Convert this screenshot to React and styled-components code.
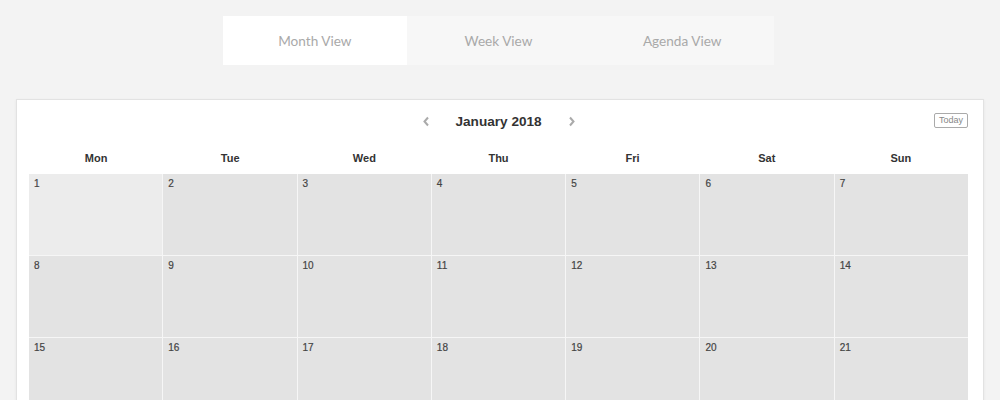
import React, { useState } from 'react';
import styled, { createGlobalStyle } from 'styled-components';

const GlobalStyle = createGlobalStyle`
    html, body {
        margin: 0;
        padding: 0;
        background: #f3f3f3;
        overflow: hidden;
    }
    * {
        box-sizing: border-box;
    }
`;

const Page = styled.div`
    display: flex;
    flex-direction: column;
    align-items: center;
    padding: 16px 16px 0 16px;
    min-height: 400px;
`;

const Tabs = styled.div`
    display: flex;
    background: #f7f7f7;
    width: 551px;
    margin-right: 3px;
`;

const Tab = styled.div`
    flex: 1;
    height: 49px;
    display: flex;
    align-items: center;
    justify-content: center;
    font-family: Lato, "Open Sans", sans-serif;
    font-size: 13.6px;
    color: #a9a9a9;
    cursor: pointer;
    background: ${({ active }) => (active ? '#ffffff' : 'transparent')};
`;

const Card = styled.div`
    margin-top: 34px;
    width: 100%;
    background: #ffffff;
    border: 1px solid #e2e2e2;
    box-shadow: 0 1px 3px rgba(0, 0, 0, 0.06);
    padding: 0 15px 0 12px;
    font-family: "Liberation Sans", Arial, Helvetica, sans-serif;
`;

const Header = styled.div`
    position: relative;
    height: 42px;
    display: flex;
    align-items: center;
    justify-content: center;
`;

const Arrow = styled.div`
    width: 60px;
    display: flex;
    align-items: center;
    justify-content: center;
    cursor: pointer;
`;

const MonthTitle = styled.div`
    width: 86px;
    text-align: center;
    font-size: 13.6px;
    font-weight: 700;
    color: #333333;
    white-space: nowrap;
`;

const TodayButton = styled.div`
    position: absolute;
    right: 0;
    top: 13px;
    border: 1px solid #aaaaaa;
    border-radius: 2px;
    font-size: 9px;
    color: #888888;
    padding: 2px 4px;
    line-height: 9px;
    cursor: pointer;
`;

const WeekHeader = styled.div`
    display: grid;
    grid-template-columns: repeat(7, 1fr);
    height: 32px;
    align-items: center;
`;

const WeekDay = styled.div`
    text-align: center;
    font-size: 11px;
    font-weight: 700;
    color: #333333;
`;

const Grid = styled.div`
    display: grid;
    grid-template-columns: repeat(7, 1fr);
    grid-auto-rows: 81px;
    gap: 1px;
    background: #f6f6f6;
`;

const Cell = styled.div`
    background: ${({ today }) => (today ? '#ececec' : '#e3e3e3')};
    padding: 4px 5px;
    font-size: 10px;
    color: #444444;
    -webkit-text-stroke: 0.2px #444444;
`;

const Chevron = ({ dir }) => (
    <svg width="8" height="11" viewBox="0 0 8 11">
        <path
            d={dir === 'left' ? 'M6 1.5 L2.5 5.5 L6 9.5' : 'M2 1.5 L5.5 5.5 L2 9.5'}
            fill="none"
            stroke="#aaaaaa"
            strokeWidth="2"
        />
    </svg>
);

const days = ['Mon', 'Tue', 'Wed', 'Thu', 'Fri', 'Sat', 'Sun'];

const App = () => {
    const [view, setView] = useState('month');
    const dates = Array.from({ length: 28 }, (_, i) => i + 1);

    return (
        <>
            <GlobalStyle />
            <Page>
                <Tabs>
                    <Tab active={view === 'month'} onClick={() => setView('month')}>Month View</Tab>
                    <Tab active={view === 'week'} onClick={() => setView('week')}>Week View</Tab>
                    <Tab active={view === 'agenda'} onClick={() => setView('agenda')}>Agenda View</Tab>
                </Tabs>
                <Card>
                    <Header>
                        <Arrow><Chevron dir="left" /></Arrow>
                        <MonthTitle>January 2018</MonthTitle>
                        <Arrow><Chevron dir="right" /></Arrow>
                        <TodayButton>Today</TodayButton>
                    </Header>
                    <WeekHeader>
                        {days.map(d => <WeekDay key={d}>{d}</WeekDay>)}
                    </WeekHeader>
                    <Grid>
                        {dates.map(d => (
                            <Cell key={d} today={d === 1}>{d}</Cell>
                        ))}
                    </Grid>
                </Card>
            </Page>
        </>
    );
};

export default App;
